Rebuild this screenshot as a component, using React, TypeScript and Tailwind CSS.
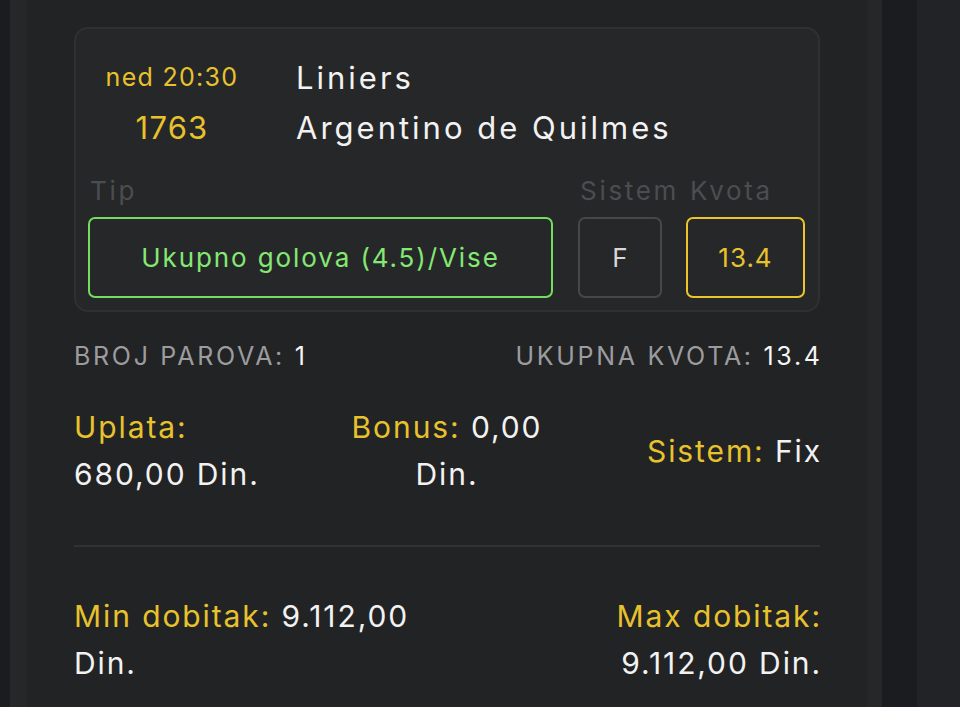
import React from "react";

const font = { fontFamily: "Inter, 'Noto Sans', sans-serif" };

export default function App() {
  return (
    <div className="w-[960px] h-[707px] overflow-hidden flex bg-[#222326]" style={font}>
      <div className="w-[10px] bg-[#1b1c1f]" />
      <div className="w-[17px] bg-[#262729]" />
      <div className="w-[840px] bg-[#222325] pl-[47px] pr-[47px]">
        {/* Card */}
        <div className="mt-[27px] w-[746px] rounded-[14px] border-2 border-[#2e3032] bg-[#262729] pl-[12px] pr-[13px] pt-[24px] pb-[12px]">
          <div className="flex h-[50px] items-center">
            <div className="w-[168px] text-center text-[25px] tracking-[1.3px] text-[#e8c22c]">ned 20:30</div>
            <div className="pl-[40px] text-[31px] tracking-[3px] text-[#f2f2f2]">Liniers</div>
          </div>
          <div className="flex h-[50px] items-center">
            <div className="w-[168px] text-center text-[31px] tracking-[1.2px] text-[#e8c22c]">1763</div>
            <div className="pl-[40px] text-[31px] tracking-[3px] text-[#f2f2f2]">Argentino de Quilmes</div>
          </div>
          <div className="mt-[17px] flex h-[40px] items-center text-[26px] tracking-[2.7px] text-[#4c4d50] whitespace-nowrap">
            <div className="flex-1 pl-[2px]">Tip</div>
            <div className="ml-[25px] w-[84px] pl-[2px]">Sistem</div>
            <div className="ml-[24px] w-[119px] pl-[4px]">Kvota</div>
          </div>
          <div className="mt-[7px] flex h-[81px]">
            <div className="flex flex-1 items-center justify-center rounded-[7px] border-2 border-[#72dd5e] text-[26px] tracking-[1.9px] text-[#84e872]">
              Ukupno golova (4.5)/Vise
            </div>
            <div className="ml-[25px] flex w-[84px] items-center justify-center rounded-[7px] border-2 border-[#464749] text-[26px] text-[#d8d8d8]">
              F
            </div>
            <div className="ml-[24px] flex w-[119px] items-center justify-center rounded-[7px] border-2 border-[#ecc52a] text-[26px] tracking-[1px] text-[#e8c22c]">
              13.4
            </div>
          </div>
        </div>

        {/* Summary */}
        <div className="mt-[25px] flex h-[40px] w-[746px] items-center justify-between text-[25px] uppercase tracking-[2.7px]">
          <div>
            <span className="text-[#9c9c9e]">Broj parova: </span>
            <span className="text-[#f5f5f5]">1</span>
          </div>
          <div className="-mr-[2.7px]">
            <span className="text-[#9c9c9e]">Ukupna kvota: </span>
            <span className="text-[#f5f5f5]">13.4</span>
          </div>
        </div>

        <div className="mt-[27px] grid w-[746px] grid-cols-3 items-center text-[30px] leading-[47px] tracking-[1.9px]">
          <div>
            <div className="text-[#e8c22c]">Uplata:</div>
            <div className="text-[#f2f2f2]">680,00 Din.</div>
          </div>
          <div className="text-center">
            <div>
              <span className="text-[#e8c22c]">Bonus: </span>
              <span className="text-[#f2f2f2]">0,00</span>
            </div>
            <div className="text-[#f2f2f2]">Din.</div>
          </div>
          <div className="-mr-[2px] text-right">
            <span className="text-[#e8c22c]">Sistem: </span>
            <span className="text-[#f2f2f2]">Fix</span>
          </div>
        </div>

        <div className="mt-[47px] h-[2px] w-[746px] bg-[#303234]" />

        <div className="mt-[46px] flex w-[746px] justify-between text-[30px] leading-[47px] tracking-[1.9px]">
          <div>
            <div>
              <span className="text-[#e8c22c]">Min dobitak: </span>
              <span className="text-[#f2f2f2]">9.112,00</span>
            </div>
            <div className="text-[#f2f2f2]">Din.</div>
          </div>
          <div className="-mr-[2px] text-right">
            <div className="text-[#e8c22c]">Max dobitak:</div>
            <div className="text-[#f2f2f2]">9.112,00 Din.</div>
          </div>
        </div>
      </div>
      <div className="w-[15px] bg-[#262729]" />
      <div className="w-[35px] bg-[#1b1c1f]" />
      <div className="flex-1 bg-[#222326]" />
    </div>
  );
}
